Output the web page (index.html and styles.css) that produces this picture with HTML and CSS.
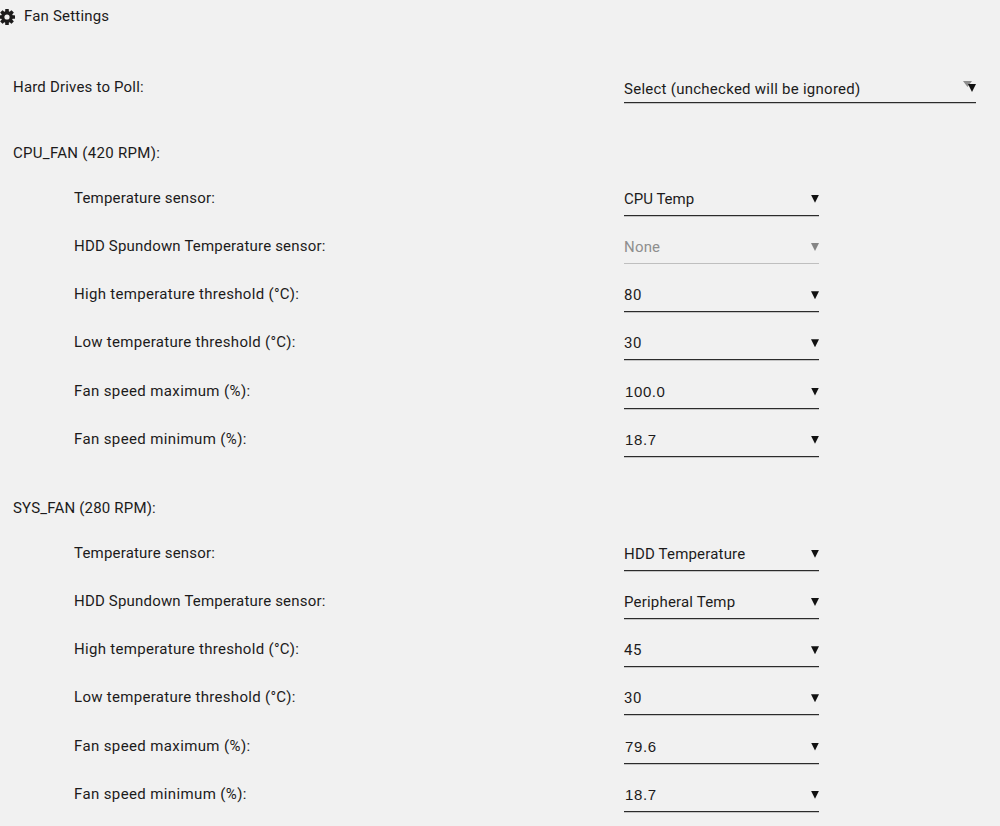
FILE: index.html
```html
<!DOCTYPE html>
<html lang="en">
<head>
<meta charset="utf-8">
<title>Fan Settings</title>
<link rel="stylesheet" href="styles.css">
</head>
<body>
<header class="title">
  <svg class="gear" viewBox="0 0 16 16" width="16" height="16"><g fill="#1c1b1b"><rect x="6.2" y="0" width="3.6" height="16" rx=".5"/><rect x="6.2" y="0" width="3.6" height="16" rx=".5" transform="rotate(45 8 8)"/><rect x="6.2" y="0" width="3.6" height="16" rx=".5" transform="rotate(90 8 8)"/><rect x="6.2" y="0" width="3.6" height="16" rx=".5" transform="rotate(135 8 8)"/><circle cx="8" cy="8" r="5.9"/></g><circle cx="8" cy="8" r="2.6" fill="#f1f1f1"/></svg>
  <h1 class="text">Fan Settings</h1>
</header>
<main>
  <div class="row poll"><span class="text">Hard Drives to Poll:</span><div class="select wide"><span class="text">Select (unchecked will be ignored)</span><i class="arrow"></i></div></div>
  <section class="fan">
    <h2 class="text loose">CPU_FAN (420 RPM):</h2>
    <div class="row"><span class="text">Temperature sensor:</span><div class="select"><span class="text tight">CPU Temp</span><i class="arrow"></i></div></div>
    <div class="row"><span class="text">HDD Spundown Temperature sensor:</span><div class="select disabled"><span class="text">None</span><i class="arrow"></i></div></div>
    <div class="row"><span class="text loose">High temperature threshold (°C):</span><div class="select"><span class="text digits">80</span><i class="arrow"></i></div></div>
    <div class="row"><span class="text loose">Low temperature threshold (°C):</span><div class="select"><span class="text digits">30</span><i class="arrow"></i></div></div>
    <div class="row"><span class="text looser">Fan speed maximum (%):</span><div class="select"><span class="text number">100.0</span><i class="arrow"></i></div></div>
    <div class="row"><span class="text looser">Fan speed minimum (%):</span><div class="select"><span class="text number">18.7</span><i class="arrow"></i></div></div>
  </section>
  <section class="fan">
    <h2 class="text">SYS_FAN (280 RPM):</h2>
    <div class="row"><span class="text">Temperature sensor:</span><div class="select"><span class="text">HDD Temperature</span><i class="arrow"></i></div></div>
    <div class="row"><span class="text">HDD Spundown Temperature sensor:</span><div class="select"><span class="text">Peripheral Temp</span><i class="arrow"></i></div></div>
    <div class="row"><span class="text loose">High temperature threshold (°C):</span><div class="select"><span class="text digits">45</span><i class="arrow"></i></div></div>
    <div class="row"><span class="text loose">Low temperature threshold (°C):</span><div class="select"><span class="text digits">30</span><i class="arrow"></i></div></div>
    <div class="row"><span class="text looser">Fan speed maximum (%):</span><div class="select"><span class="text number">79.6</span><i class="arrow"></i></div></div>
    <div class="row"><span class="text looser">Fan speed minimum (%):</span><div class="select"><span class="text number">18.7</span><i class="arrow"></i></div></div>
  </section>
</main>
</body>
</html>
```
FILE: styles.css
```css
* { box-sizing: border-box; }
body { margin: 0; height: 826px; overflow: hidden; background: #f1f1f1; color: #1c1b1b; font: 15px/20px Roboto, "Noto Sans", sans-serif; letter-spacing: .19px; }
h1, h2 { margin: 0; font-size: inherit; font-weight: 400; }
.text { white-space: nowrap; }
.loose { letter-spacing: .3px; }
.looser { letter-spacing: .38px; }
.tight { letter-spacing: 0; }
.digits { letter-spacing: .6px; }
.title { display: flex; gap: 9px; height: 76px; padding-top: 6px; margin-left: -1px; }
.gear { margin-top: 3px; }
.row { display: grid; grid-template-columns: 550px 195px; height: 48.2px; padding-left: 74px; }
.poll { grid-template-columns: 611px 352px; height: 67px; padding: 1px 0 0 13px; }
.fan { height: 355px; }
.fan h2 { height: 44.8px; padding-left: 13px; }
.select { display: flex; justify-content: space-between; height: 28px; padding-top: 1px; border-bottom: 1px solid #2b2b2b; box-shadow: 0 1px 0 #c4c4c4; }
.wide { position: relative; height: 26px; padding-top: 2px; letter-spacing: .26px; }
.wide::before { content: ""; position: absolute; right: 4px; top: 4px; width: 9px; height: 6px; background: #8d8d8d; clip-path: polygon(0 0, 100% 0, 50% 100%); }
.arrow { position: relative; width: 8px; height: 8px; margin-top: 6px; background: #111; clip-path: polygon(0 0, 100% 0, 50% 100%); }
.wide .arrow { margin-top: 5px; }
.disabled { color: #8e8e8e; border-color: #bfbfbf; box-shadow: none; }
.disabled .arrow { background: #858585; }
.number { font-family: "Liberation Sans", sans-serif; letter-spacing: .6px; padding-left: 1px; }
```
